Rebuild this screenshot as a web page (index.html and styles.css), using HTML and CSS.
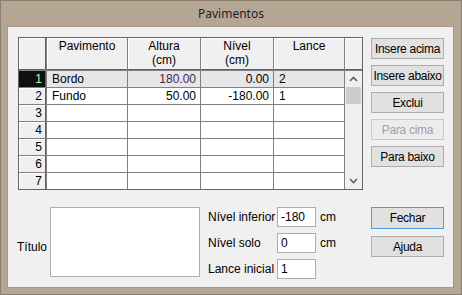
FILE: index.html
```html
<html>
  <head>
    <link rel="stylesheet" href="styles.css">
  </head>
  <body>
    <div class="window">
      <div class="title">Pavimentos</div>
      <div class="client">
        <div class="top">
          <div class="grid">
            <div class="hd"></div>
            <div class="hd">Pavimento</div>
            <div class="hd">Altura<br>(cm)</div>
            <div class="hd">Nível<br>(cm)</div>
            <div class="hd">Lance</div>
            <div class="hd"></div>

            <div class="scroll">
              <div class="arrow">
                <svg width="9" height="6" viewBox="0 0 9 6"><polyline points="1,5 4.5,1.5 8,5" fill="none" stroke="#606060" stroke-width="1.6"/></svg>
              </div>
              <div class="thumb"></div>
              <div class="track"></div>
              <div class="arrow">
                <svg width="9" height="6" viewBox="0 0 9 6"><polyline points="1,1 4.5,4.5 8,1" fill="none" stroke="#606060" stroke-width="1.6"/></svg>
              </div>
            </div>

            <div class="rh sel">1</div>
            <div class="cell cur">Bordo</div>
            <div class="cell cur num purple">180.00</div>
            <div class="cell cur num">0.00</div>
            <div class="cell cur">2</div>

            <div class="rh">2</div>
            <div class="cell">Fundo</div>
            <div class="cell num">50.00</div>
            <div class="cell num">-180.00</div>
            <div class="cell">1</div>

            <div class="rh">3</div>
            <div class="cell"></div><div class="cell"></div><div class="cell"></div><div class="cell"></div>
            <div class="rh">4</div>
            <div class="cell"></div><div class="cell"></div><div class="cell"></div><div class="cell"></div>
            <div class="rh">5</div>
            <div class="cell"></div><div class="cell"></div><div class="cell"></div><div class="cell"></div>
            <div class="rh">6</div>
            <div class="cell"></div><div class="cell"></div><div class="cell"></div><div class="cell"></div>
            <div class="rh">7</div>
            <div class="cell"></div><div class="cell"></div><div class="cell"></div><div class="cell"></div>
          </div>

          <div class="side">
            <button class="btn">Insere acima</button>
            <button class="btn">Insere abaixo</button>
            <button class="btn">Exclui</button>
            <button class="btn" disabled>Para cima</button>
            <button class="btn">Para baixo</button>
          </div>
        </div>

        <div class="bottom">
          <label class="titulo">Título</label>
          <div class="memo"></div>
          <div class="fields">
            <label>Nível inferior</label>
            <div class="edit">-180</div>
            <span class="unit">cm</span>

            <label>Nível solo</label>
            <div class="edit">0</div>
            <span class="unit">cm</span>

            <label>Lance inicial</label>
            <div class="edit">1</div>
            <span></span>
          </div>
          <div class="side low">
            <button class="btn default">Fechar</button>
            <button class="btn">Ajuda</button>
          </div>
        </div>
      </div>
    </div>
  </body>
</html>
```

FILE: styles.css
```css
* {
  box-sizing: border-box;
  font-family: "Liberation Sans", Arial, sans-serif;
}

body {
  margin: 0;
}

.window {
  width: 462px;
  height: 295px;
  background-color: #b5a593;
  border: 1px solid #8c7d6c;
}

.title {
  height: 25px;
  line-height: 25px;
  text-align: center;
  font-family: "Noto Sans", sans-serif;
  font-size: 12px;
  color: #1e1e1e;
}

.client {
  margin-left: 6px;
  width: 447px;
  height: 262px;
  background-color: #f0f0f0;
  border: 1px solid #a69886;
}

.top {
  display: flex;
  padding: 10px 9px 0 10px;
}

/* the data grid */
.grid {
  display: grid;
  grid-template-columns: 27px 80px 72px 72px 70px 17px;
  grid-template-rows: 32px repeat(7, 16px);
  gap: 1px;
  width: 345px;
  background-color: #808080;
  border: 1px solid #646464;
  font-size: 12px;
}

.hd {
  background-color: #f0f0f0;
  border-bottom: 1px solid #606060;
  box-shadow: inset 1px 1px #ffffff;
  text-align: center;
  line-height: 14px;
  padding-top: 1px;
  color: #000;
}

.hd:first-child {
  border-right: 1px solid #606060;
}

.rh {
  background-color: #f0f0f0;
  border-right: 1px solid #606060;
  box-shadow: inset 1px 1px #ffffff;
  text-align: right;
  padding-right: 3px;
  line-height: 16px;
}

.rh.sel {
  background-color: #101010;
  color: #b4ffb4;
  box-shadow: none;
}

.cell {
  background-color: #ffffff;
  line-height: 16px;
  padding: 0 4px 0 5px;
  white-space: nowrap;
}

.cell.cur {
  background-color: #e6e6ea;
}

.num {
  text-align: right;
}

.purple {
  color: #402848;
}

.scroll {
  grid-column: 6;
  grid-row: 2 / 9;
  display: flex;
  flex-direction: column;
  background-color: #f0f0f0;
}

.arrow {
  height: 16px;
  display: flex;
  align-items: center;
  justify-content: center;
}

.thumb {
  height: 17px;
  margin: 0 1px;
  background-color: #cdcdcd;
}

.track {
  flex: 1;
}

/* buttons */
.side {
  display: flex;
  flex-direction: column;
  gap: 6px;
  width: 73px;
  margin-left: auto;
  padding-top: 1px;
}

.btn {
  height: 21px;
  padding: 0;
  font-size: 12px;
  letter-spacing: -0.3px;
  white-space: nowrap;
  color: #000;
  background-color: #e1e1e1;
  border: 1px solid #adadad;
}

.btn:disabled {
  color: #a0a0a0;
  background-color: #ececec;
  border-color: #c8c8c8;
}

.btn.default {
  height: 22px;
  border-color: #4a9de8;
}

/* bottom part */
.bottom {
  display: flex;
  align-items: flex-start;
  margin-top: 17px;
  padding: 0 9px 0 9px;
  font-size: 12px;
}

.titulo {
  width: 33px;
  margin-top: 33px;
  line-height: 14px;
}

.memo {
  width: 150px;
  height: 70px;
  background-color: #ffffff;
  border: 1px solid #abadb3;
}

.fields {
  display: grid;
  grid-template-columns: 69px 39px 36px;
  grid-auto-rows: 20px;
  row-gap: 6px;
  margin-left: 8px;
  line-height: 20px;
}

.edit {
  height: 20px;
  line-height: 18px;
  padding-left: 3px;
  background-color: #ffffff;
  border: 1px solid #abadb3;
}

.unit {
  padding-left: 4px;
}

.side.low {
  padding-top: 0;
  gap: 7px;
}
```
